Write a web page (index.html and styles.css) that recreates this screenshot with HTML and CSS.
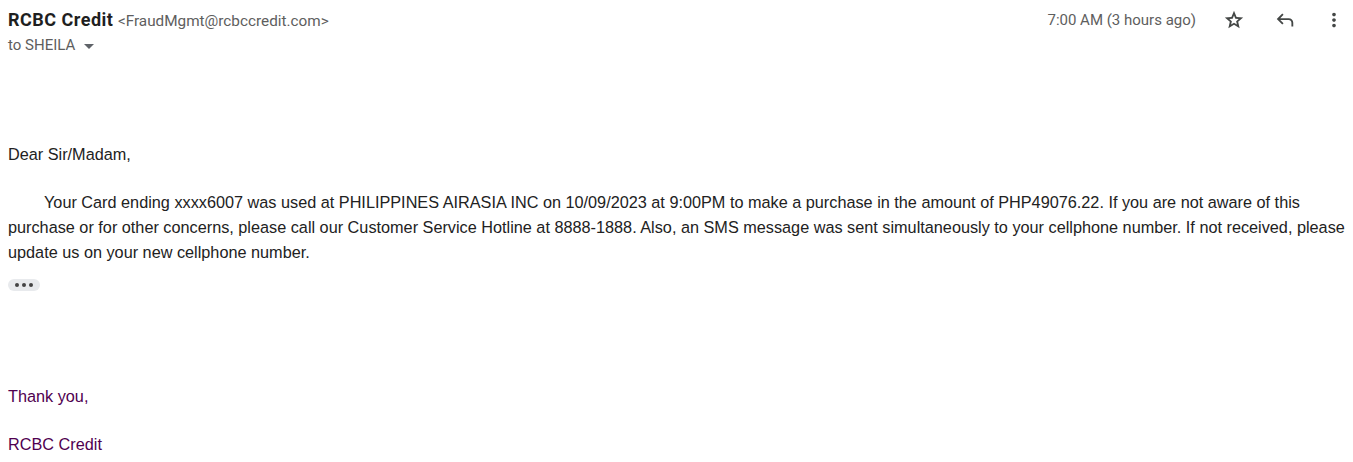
FILE: index.html
```html
<!DOCTYPE html>
<html>
<head>
    <title>RCBC Credit</title>
    <meta charset="UTF-8">
    <link rel="stylesheet" href="styles.css">
</head>
<body>
    <div class="header">
        <div class="sender">
            <div class="from">
                <span class="name">RCBC Credit</span>
                <span class="email">&lt;FraudMgmt@rcbccredit.com&gt;</span>
            </div>
            <div class="to">
                to SHEILA
                <svg class="caret" width="10" height="5" viewBox="0 0 10 5"><path d="M0 0 L5 5 L10 0 Z" fill="#5f6368"/></svg>
            </div>
        </div>
        <div class="meta">
            <span class="time">7:00 AM (3 hours ago)</span>
            <svg class="icon star" width="22" height="22" viewBox="0 -960 960 960"><path d="m354-287 126-76 126 77-33-144 111-96-146-13-58-136-58 135-146 13 111 97-33 143ZM233-120l65-281L80-590l288-25 112-265 112 265 288 25-218 189 65 281-247-149-247 149Zm247-350Z" fill="#444746"/></svg>
            <svg class="icon reply" width="22" height="22" viewBox="0 -960 960 960"><path d="M760-200v-160q0-50-35-85t-85-35H273l144 144-57 56-240-240 240-240 57 56-144 144h367q83 0 141.5 58.5T840-360v160h-80Z" fill="#444746"/></svg>
            <svg class="icon more" width="22" height="22" viewBox="0 -960 960 960"><path d="M480-160q-33 0-56.5-23.5T400-240q0-33 23.5-56.5T480-320q33 0 56.5 23.5T560-240q0 33-23.5 56.5T480-160Zm0-240q-33 0-56.5-23.5T400-480q0-33 23.5-56.5T480-560q33 0 56.5 23.5T560-480q0 33-23.5 56.5T480-400Zm0-240q-33 0-56.5-23.5T400-720q0-33 23.5-56.5T480-800q33 0 56.5 23.5T560-720q0 33-23.5 56.5T480-640Z" fill="#444746"/></svg>
        </div>
    </div>

    <div class="message">
        <p class="greeting">Dear Sir/Madam,</p>
        <p class="body-text">Your Card ending xxxx6007 was used at PHILIPPINES AIRASIA INC on 10/09/2023 at 9:00PM to make a purchase in the amount of PHP49076.22. If you are not aware of this purchase or for other concerns, please call our Customer Service Hotline at 8888-1888. Also, an SMS message was sent simultaneously to your cellphone number. If not received, please update us on your new cellphone number.</p>
        <div class="trimmed"><span></span><span></span><span></span></div>
        <p class="signoff">Thank you,</p>
        <p class="signoff sig">RCBC Credit</p>
    </div>
</body>
</html>
```

FILE: styles.css
```css
body {
    margin: 0;
    padding: 0 6px 0 8px;
    font-family: "Liberation Sans", Arial, sans-serif;
    color: #222;
    background: #fff;
}
.header {
    display: flex;
    justify-content: space-between;
    padding-top: 10px;
    padding-right: 2px;
}
.from {
    height: 20px;
    line-height: 20px;
}
.name {
    font-family: Roboto, "Liberation Sans", sans-serif;
    font-weight: bold;
    font-size: 18px;
    letter-spacing: 0.5px;
    color: #1f1f1f;
}
.email {
    font-family: Roboto, "Liberation Sans", sans-serif;
    font-size: 15.3px;
    color: #5e5e5e;
}
.to {
    margin-top: 5px;
    font-family: Roboto, "Liberation Sans", sans-serif;
    font-size: 15px;
    color: #5e5e5e;
    line-height: 20px;
}
.caret {
    margin-left: 5px;
    vertical-align: middle;
}
.meta {
    display: flex;
    align-items: center;
    height: 20px;
}
.time {
    font-family: Roboto, "Liberation Sans", sans-serif;
    font-size: 15px;
    color: #5e5e5e;
    margin-right: 27px;
}
.icon {
    display: block;
}
.star {
    margin-right: 29px;
}
.reply {
    margin-right: 27px;
}
.message {
    font-size: 16.25px;
    line-height: 25px;
}
.greeting {
    margin: 87px 0 0;
}
.body-text {
    margin: 23px 0 0;
    text-indent: 36px;
}
.trimmed {
    display: inline-flex;
    align-items: center;
    gap: 3px;
    margin-top: 14px;
    padding: 0 7px;
    height: 12px;
    border-radius: 6px;
    background: #e8eaed;
}
.trimmed span {
    width: 4px;
    height: 4px;
    border-radius: 50%;
    background: #444;
}
.signoff {
    margin: 90px 0 0;
    color: #500050;
}
.sig {
    margin-top: 23px;
}
```
